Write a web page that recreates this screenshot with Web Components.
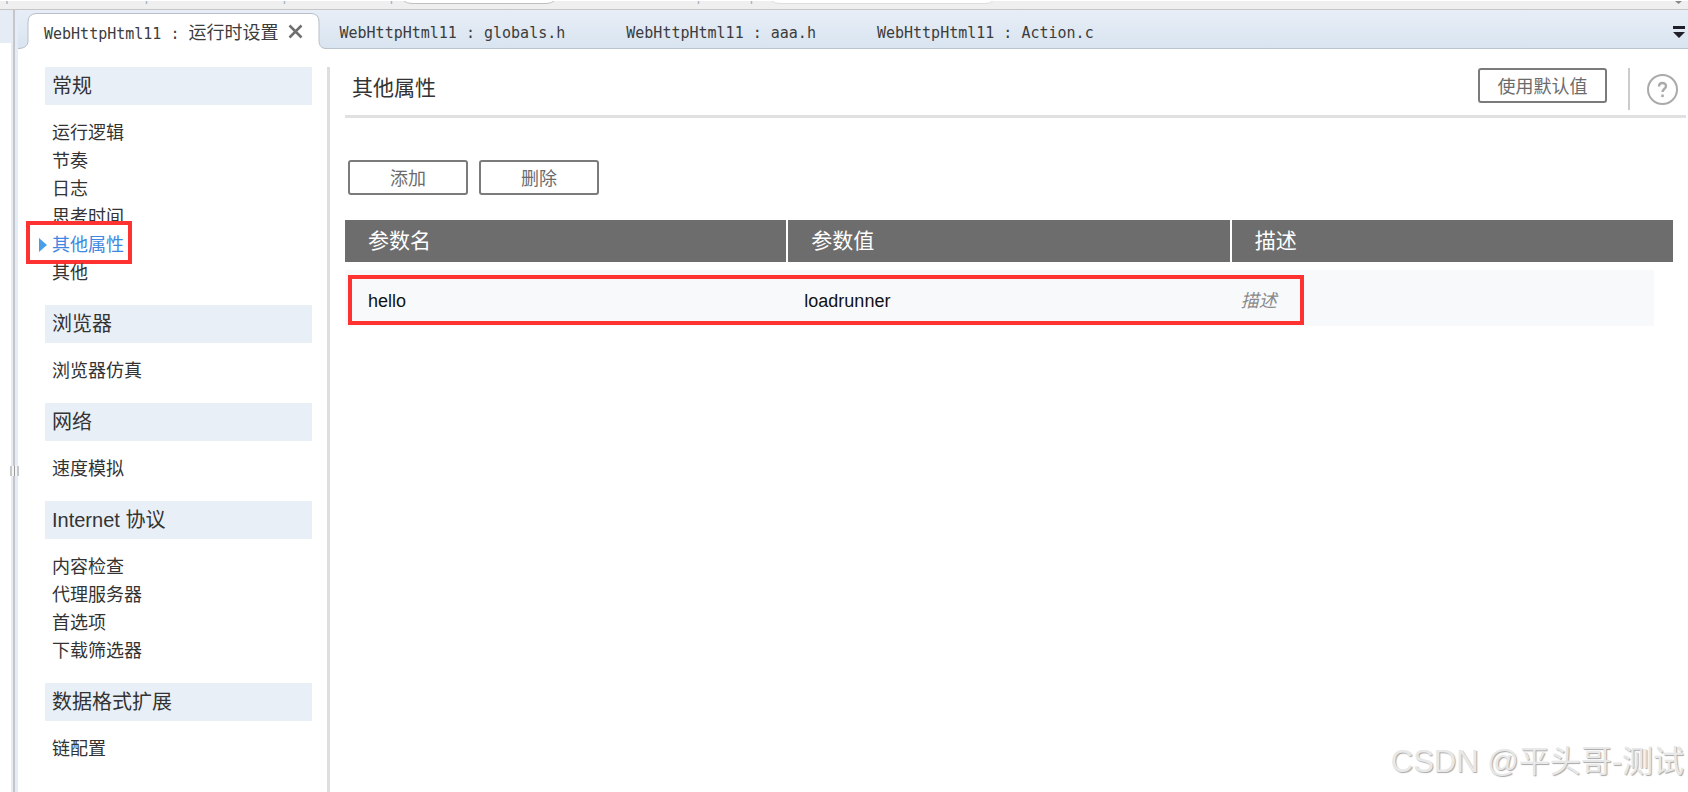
<!DOCTYPE html>
<html lang="zh-CN">
<head>
<meta charset="utf-8">
<meta name="viewport" content="width=device-width, initial-scale=1">
<title>WebHttpHtml11 : 运行时设置</title>
<style>
  html, body { height: 100%; }
  body {
    margin: 0;
    display: flex;
    flex-direction: column;
    background: #fff;
    color: #333;
    font: 18px/28px "Liberation Sans", "Noto Sans CJK SC", sans-serif;
    overflow: hidden;
  }
  .workspace { flex: 1; display: flex; min-height: 0; }
  .editor { flex: 1; display: flex; flex-direction: column; min-width: 0; }
  .content { flex: 1; display: flex; min-height: 0; padding: 18px 0 0 27px; }
</style>
</head>
<body>
  <tool-strip></tool-strip>
  <div class="workspace">
    <side-splitter></side-splitter>
    <div class="editor">
      <tab-strip>
        <doc-tab active>WebHttpHtml11 : <span class="cjk">运行时设置</span></doc-tab>
        <doc-tab>WebHttpHtml11 : globals.h</doc-tab>
        <doc-tab>WebHttpHtml11 : aaa.h</doc-tab>
        <doc-tab>WebHttpHtml11 : Action.c</doc-tab>
      </tab-strip>
      <div class="content">
        <settings-nav>
          <nav-section heading="常规">
            <nav-item>运行逻辑</nav-item>
            <nav-item>节奏</nav-item>
            <nav-item>日志</nav-item>
            <nav-item>思考时间</nav-item>
            <nav-item current>其他属性</nav-item>
            <nav-item>其他</nav-item>
          </nav-section>
          <nav-section heading="浏览器">
            <nav-item>浏览器仿真</nav-item>
          </nav-section>
          <nav-section heading="网络">
            <nav-item>速度模拟</nav-item>
          </nav-section>
          <nav-section heading="Internet 协议">
            <nav-item>内容检查</nav-item>
            <nav-item>代理服务器</nav-item>
            <nav-item>首选项</nav-item>
            <nav-item>下载筛选器</nav-item>
          </nav-section>
          <nav-section heading="数据格式扩展">
            <nav-item>链配置</nav-item>
          </nav-section>
        </settings-nav>
        <settings-page heading="其他属性">
          <outline-button slot="actions" style="--width: 129px">使用默认值</outline-button>
          <outline-button slot="toolbar">添加</outline-button>
          <outline-button slot="toolbar">删除</outline-button>
          <param-table></param-table>
        </settings-page>
      </div>
    </div>
  </div>
  <water-mark>CSDN @平头哥-测试</water-mark>

<script>
class ToolStrip extends HTMLElement {
  connectedCallback() {
    this.attachShadow({ mode: 'open' });
    this.shadowRoot.innerHTML = `
      <style>
        :host { display: block; height: 8px; background: #efefef; border-top: 1px solid #fff; border-bottom: 1px solid #c6c6c6; overflow: hidden; }
        svg { display: block; }
      </style>
      <svg width="1688" height="8" aria-hidden="true">
        <path d="M7 0v3M146.500 0v3M284.500 0v3M391.500 0v3M698.500 0v3M751.500 0v3" stroke="#a9b7c6" stroke-width="1.500"/>
        <path d="M404 0q3 2.500 8 2.500h134q5 0 8-2.500" fill="#fff" stroke="#c0c0c0"/>
        <path d="M772 0q3 2.500 8 2.500h205q5 0 8-2.500" fill="#fff" stroke="#ddd"/>
        <path d="M1675 0h7l-3.500 3z" fill="#888"/>
      </svg>
    `;
  }
}
customElements.define('tool-strip', ToolStrip);

class SideSplitter extends HTMLElement {
  connectedCallback() {
    this.attachShadow({ mode: 'open' });
    this.shadowRoot.innerHTML = `
      <style>
        :host { display: flex; }
        .panel { width: 11px; background: linear-gradient(#e5ecf6 33px, #fff 33px); }
        .bar {
          width: 7px;
          display: flex;
          align-items: center;
          justify-content: center;
          background: linear-gradient(90deg, #e6ecf6 2px, #c4c6ca 2px, #c4c6ca 4px, #e6ecf6 4px);
        }
        svg { flex: none; margin-bottom: -140px; }
      </style>
      <div class="panel"></div>
      <div class="bar">
        <svg width="9" height="10" aria-hidden="true">
          <path fill="#f5f6f8" d="M0 0h9v10H0z"/>
          <path d="M1 0v10M4.500 0v10M8 0v10" stroke="#999"/>
        </svg>
      </div>
    `;
  }
}
customElements.define('side-splitter', SideSplitter);

class TabStrip extends HTMLElement {
  connectedCallback() {
    this.attachShadow({ mode: 'open' });
    this.shadowRoot.innerHTML = `
      <style>
        :host {
          display: flex;
          align-items: flex-end;
          height: 39px;
          background: linear-gradient(#b9c4cf, #b9c4cf) bottom / 100% 1px no-repeat, linear-gradient(#e8eef7, #d8e4f0);
        }
        .tabs { flex: 1; display: flex; min-width: 0; }
        button { border: 0; padding: 0; margin: 0 3px 10px 0; background: none; width: 12px; height: 14px; }
        svg { display: block; }
      </style>
      <div class="tabs"><slot></slot></div>
      <button aria-label="窗口列表">
        <svg width="12" height="14"><path d="M0 1h12v3H0zM0 7h12l-6 6z" fill="#1f1f29"/></svg>
      </button>
    `;
  }
}
customElements.define('tab-strip', TabStrip);

class DocTab extends HTMLElement {
  connectedCallback() {
    this.attachShadow({ mode: 'open' });
    const label = `<button class="label"><slot></slot></button>`;
    this.shadowRoot.innerHTML = `
      <style>
        :host { display: flex; height: 36px; color: #3c3c3c; }
        button { border: 0; margin: 0; padding: 0; background: none; color: inherit; }
        .label {
          padding: 4px 47px 0 14px;
          font: 15px/32px "DejaVu Sans Mono", "Noto Sans CJK SC", monospace;
          white-space: pre;
        }
        ::slotted(.cjk) { font-size: 18px; }
        svg { display: block; }
        .body { display: flex; align-items: center; gap: 9px; padding: 0 7px 0 6px; background: #fff; border-top: 1px solid #b9bfc8; }
        .body .label { padding: 3px 0 0; }
      </style>
      ${this.hasAttribute('active') ? `
        <svg width="20" height="36" aria-hidden="true">
          <path d="M0 36C6 35 10 33 10 28V9Q10 .500 19 .500H20V36z" fill="#fff"/>
          <path d="M0 35.500C6 35.500 10 33 10 28V9Q10 .500 19 .500H20" fill="none" stroke="#b9bfc8"/>
        </svg>
        <div class="body">
          ${label}
          <button aria-label="关闭">
            <svg width="15" height="15"><path d="M1.500 1.500l12 12M13.500 1.500l-12 12" stroke="#6e6e6e" stroke-width="2.500"/></svg>
          </button>
        </div>
        <svg width="16" height="36" aria-hidden="true">
          <path d="M0 36V.500H1Q9 .500 9 9V28C9 33 12 35 16 36z" fill="#fff"/>
          <path d="M0 .500H1Q9 .500 9 9V28C9 33 12 35.500 16 35.500" fill="none" stroke="#b9bfc8"/>
        </svg>` : label}
    `;
  }
}
customElements.define('doc-tab', DocTab);

class SettingsNav extends HTMLElement {
  connectedCallback() {
    this.attachShadow({ mode: 'open' });
    this.shadowRoot.innerHTML = `
      <style>
        :host { display: block; flex: none; width: 267px; padding-right: 15px; border-right: 3px solid #dedede; }
      </style>
      <nav><slot></slot></nav>
    `;
  }
}
customElements.define('settings-nav', SettingsNav);

class NavSection extends HTMLElement {
  connectedCallback() {
    this.attachShadow({ mode: 'open' });
    this.shadowRoot.innerHTML = `
      <style>
        :host { display: block; }
        h2 { margin: 0; padding: 1px 7px 0; font-size: 20px; line-height: 37px; font-weight: 400; background: #e8eff7; }
        .items { display: flex; flex-direction: column; align-items: flex-start; padding: 14px 7px 18px; }
      </style>
      <h2>${this.getAttribute('heading')}</h2>
      <div class="items"><slot></slot></div>
    `;
  }
}
customElements.define('nav-section', NavSection);

class NavItem extends HTMLElement {
  connectedCallback() {
    this.attachShadow({ mode: 'open' });
    this.shadowRoot.innerHTML = `
      <style>
        :host { display: block; position: relative; }
        a { display: block; color: inherit; text-decoration: none; }
        :host([current]) a { color: #3f87e0; }
        svg { position: absolute; left: -13px; top: 7px; }
        .callout { position: absolute; inset: -10px -8px -5px -26px; border: 4px solid #ff3232; }
      </style>
      <a href="#"><slot></slot></a>
      ${this.hasAttribute('current') ? `
        <svg width="8" height="14" aria-hidden="true"><path d="M0 0l8 7-8 7z" fill="#4a9ee8"/></svg>
        <div class="callout"></div>` : ''}
    `;
  }
}
customElements.define('nav-item', NavItem);

class OutlineButton extends HTMLElement {
  connectedCallback() {
    this.attachShadow({ mode: 'open' });
    this.shadowRoot.innerHTML = `
      <style>
        :host { display: block; }
        button {
          display: block;
          box-sizing: border-box;
          width: var(--width, 120px);
          height: 35px;
          padding: 2px 0 0;
          border: 2px solid #7b7b7b;
          border-radius: 3px;
          background: #fff;
          color: #6b6b6b;
          font: inherit;
        }
      </style>
      <button><slot></slot></button>
    `;
  }
}
customElements.define('outline-button', OutlineButton);

class SettingsPage extends HTMLElement {
  connectedCallback() {
    this.attachShadow({ mode: 'open' });
    this.shadowRoot.innerHTML = `
      <style>
        :host { display: block; flex: 1; min-width: 0; padding: 0 2px 0 15px; }
        header { display: flex; align-items: flex-start; height: 48px; border-bottom: 3px solid #e0e0e0; }
        h1 { flex: 1; margin: 0; padding-left: 7px; font-size: 21px; line-height: 42px; font-weight: 400; }
        .actions { padding-top: 1px; }
        .help { display: flex; align-items: center; height: 42px; margin: 1px 8px 0 21px; padding-left: 17px; border-left: 2px solid #ccc; }
        .help button { border: 0; padding: 0; background: none; }
        svg { display: block; }
        .toolbar { display: flex; gap: 11px; padding: 42px 3px 25px; }
      </style>
      <header>
        <h1>${this.getAttribute('heading')}</h1>
        <div class="actions"><slot name="actions"></slot></div>
        <div class="help">
          <button aria-label="帮助">
            <svg width="31" height="31" viewBox="0 0 31 31" fill="none" stroke="#aaa">
              <circle cx="15.500" cy="15.500" r="14.500" stroke-width="2"/>
              <path d="M12 12.500c0-4.500 7-4.500 7-.500 0 3-3.500 3-3.500 6" stroke-width="2.400"/>
              <path d="M15.500 20.500v2.600" stroke-width="2.600"/>
            </svg>
          </button>
        </div>
      </header>
      <div class="toolbar"><slot name="toolbar"></slot></div>
      <slot></slot>
    `;
  }
}
customElements.define('settings-page', SettingsPage);

class ParamTable extends HTMLElement {
  connectedCallback() {
    this.attachShadow({ mode: 'open' });
    this.shadowRoot.innerHTML = `
      <style>
        :host { display: block; position: relative; padding-right: 13px; }
        table, thead, tbody { display: block; }
        tr { display: grid; grid-template-columns: repeat(3, 1fr); }
        th, td { padding: 0 23px; text-align: left; font-weight: 400; }
        thead tr { gap: 2px; }
        th { background: #6d6d6d; color: #fff; font-size: 21px; line-height: 42px; }
        tbody { padding: 8px 19px 0 0; }
        tbody tr { background: #f8f9fb; color: #111; }
        td { padding-top: 6px; line-height: 50px; }
        .hint { font-style: italic; color: #8a8a8a; }
        .callout { position: absolute; left: 3px; right: 382px; bottom: 1px; height: 42px; border: 4px solid #ff3232; }
      </style>
      <table>
        <thead>
          <tr><th>参数名</th><th>参数值</th><th>描述</th></tr>
        </thead>
        <tbody>
          <tr><td>hello</td><td>loadrunner</td><td class="hint">描述</td></tr>
        </tbody>
      </table>
      <div class="callout"></div>
    `;
  }
}
customElements.define('param-table', ParamTable);

class WaterMark extends HTMLElement {
  connectedCallback() {
    this.attachShadow({ mode: 'open' });
    this.shadowRoot.innerHTML = `
      <style>
        :host {
          position: absolute;
          right: 4px;
          bottom: 8px;
          font-size: 31px;
          line-height: 44px;
          color: #e8e8e8;
          text-shadow: 1px 1px 1px #a8a8a8;
          pointer-events: none;
        }
      </style>
      <slot></slot>
    `;
  }
}
customElements.define('water-mark', WaterMark);
</script>
</body>
</html>
